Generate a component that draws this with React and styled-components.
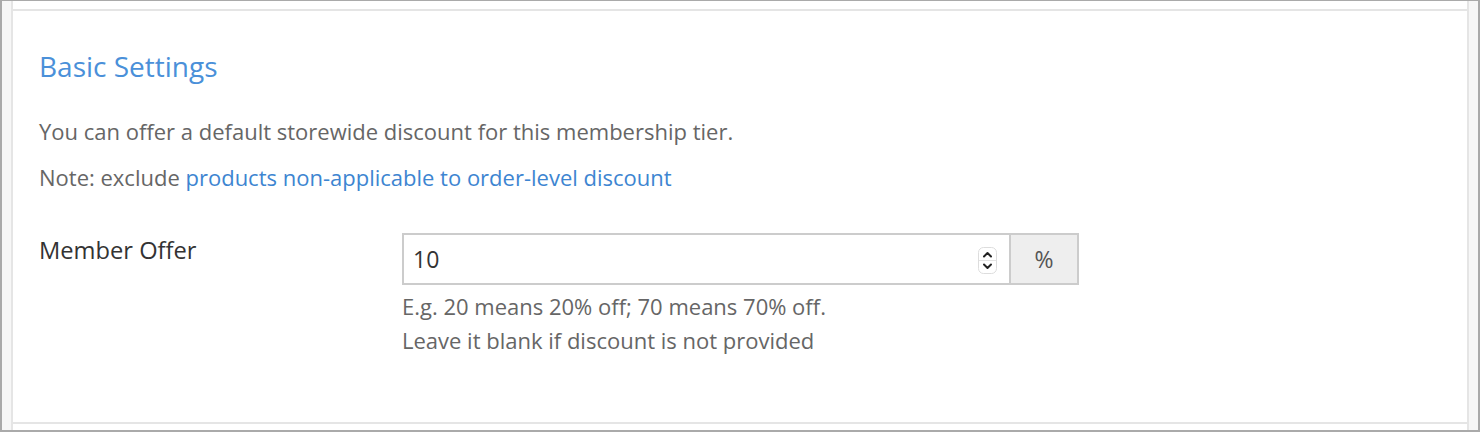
import React from 'react'
import styled, { createGlobalStyle } from 'styled-components'

const GlobalStyle = createGlobalStyle`
  html, body {
    margin: 0;
    padding: 0;
    background: #fff;
  }
  body {
    font-family: "Open Sans", "Noto Sans", sans-serif;
  }
  * {
    box-sizing: border-box;
  }
`

const Frame = styled.div`
  height: 432px;
  border: 2px solid #aaa;
  border-top-width: 1px;
  background: #f7f7f7;
  padding: 0 9px;
  display: flex;
`

const Card = styled.div`
  flex: 1;
  background: #fff;
  border-left: 2px solid #e5e5e5;
  border-right: 2px solid #e5e5e5;
  padding: 8px 0 6px;
  display: flex;
  flex-direction: column;
`

const Section = styled.section`
  flex: 1;
  border-top: 2px solid #e5e5e5;
  border-bottom: 2px solid #e5e5e5;
  padding: 38px 26px 0;
`

const Title = styled.h2`
  margin: 0 0 33px;
  font-size: 28px;
  line-height: 34px;
  font-weight: 400;
  color: #4a90d9;
`

const Text = styled.p`
  margin: 0 0 16px;
  font-size: 22px;
  line-height: 30px;
  color: #666;
`

const TextLink = styled.a`
  color: #3d85d1;
  text-decoration: none;
  cursor: pointer;
`

const FormRow = styled.div`
  display: grid;
  grid-template-columns: 363px 677px;
  margin-top: 41px;
`

const Label = styled.label`
  font-size: 23.7px;
  line-height: 34px;
  color: #333;
`

const InputGroup = styled.div`
  display: flex;
  height: 52px;
`

const InputWrap = styled.div`
  position: relative;
  flex: 1;
  border: 2px solid #ccc;
  background: #fff;
`

const NumberInput = styled.input`
  width: 100%;
  height: 100%;
  border: none;
  outline: none;
  padding: 0 40px 0 9px;
  font-family: inherit;
  font-size: 23px;
  color: #333;
  background: transparent;
  -moz-appearance: textfield;
  &::-webkit-inner-spin-button,
  &::-webkit-outer-spin-button {
    -webkit-appearance: none;
    margin: 0;
  }
`

const Spinner = styled.svg`
  position: absolute;
  right: 12px;
  top: 12px;
`

const Addon = styled.span`
  width: 68px;
  display: flex;
  align-items: center;
  justify-content: center;
  border: 2px solid #ccc;
  border-left: none;
  background: #eee;
  font-size: 23px;
  color: #555;
`

const Help = styled.div`
  margin-top: 4px;
  font-size: 22px;
  line-height: 34px;
  color: #666;
`

const App = () => {
  return (
    <>
      <GlobalStyle />
      <Frame>
        <Card>
          <Section>
            <Title>Basic Settings</Title>
            <Text>You can offer a default storewide discount for this membership tier.</Text>
            <Text>
              Note: exclude <TextLink>products non-applicable to order-level discount</TextLink>
            </Text>
            <FormRow>
              <Label htmlFor="member-offer">Member Offer</Label>
              <div>
                <InputGroup>
                  <InputWrap>
                    <NumberInput id="member-offer" type="number" defaultValue="10" />
                    <Spinner width="19" height="27" viewBox="0 0 19 27">
                      <rect x="0.5" y="0.5" width="18" height="26" rx="5" fill="#fff" stroke="#ddd" />
                      <line x1="1" y1="13.5" x2="18" y2="13.5" stroke="#e3e3e3" />
                      <path d="M6 9.5 L9.5 6 L13 9.5" fill="none" stroke="#222" strokeWidth="2" strokeLinecap="round" strokeLinejoin="round" />
                      <path d="M6 17.5 L9.5 21 L13 17.5" fill="none" stroke="#222" strokeWidth="2" strokeLinecap="round" strokeLinejoin="round" />
                    </Spinner>
                  </InputWrap>
                  <Addon>%</Addon>
                </InputGroup>
                <Help>
                  E.g. 20 means 20% off; 70 means 70% off.
                  <br />
                  Leave it blank if discount is not provided
                </Help>
              </div>
            </FormRow>
          </Section>
        </Card>
      </Frame>
    </>
  )
}

export default App
